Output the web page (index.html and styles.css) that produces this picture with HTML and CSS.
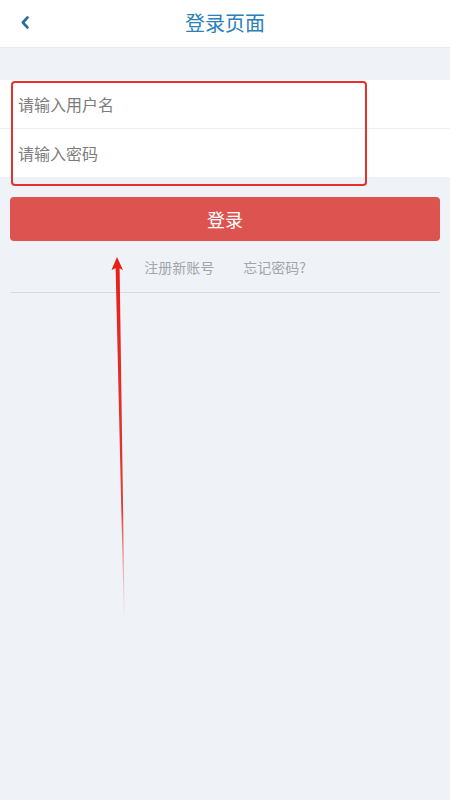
FILE: index.html
```html
<!DOCTYPE html>
<html lang="zh-CN">
<head>
<meta charset="utf-8">
<title>登录页面</title>
<link rel="stylesheet" href="styles.css">
</head>
<body>
<div class="page">
  <header class="header">
    <span class="back">
      <svg width="12" height="16" viewBox="0 0 12 16"><polyline points="8.5,2.5 3.8,7.5 8.5,12.5" fill="none" stroke="#2a6f98" stroke-width="2.6" stroke-linecap="round" stroke-linejoin="round"/></svg>
    </span>
    <h1 class="title">登录页面</h1>
  </header>

  <div class="form">
    <div class="row">请输入用户名</div>
    <div class="row">请输入密码</div>
  </div>

  <div class="btn">登录</div>

  <div class="links">
    <span class="link">注册新账号</span>
    <span class="link">忘记密码?</span>
  </div>
  <div class="divider"></div>

  <div class="mark-box"></div>
  <svg class="arrow" width="450" height="800" viewBox="0 0 450 800">
    <defs>
      <linearGradient id="g" x1="0" y1="0" x2="0" y2="1">
        <stop offset="0" stop-color="#e8201a"/>
        <stop offset="0.7" stop-color="#e23a36"/>
        <stop offset="1" stop-color="#f0c8d0" stop-opacity="0.4"/>
      </linearGradient>
    </defs>
    <polygon points="115.6,267 119.6,267 124.6,615 123.8,615" fill="url(#g)"/>
    <polygon points="117,257 111.5,270 117.6,267.5 123,270" fill="#e8201a"/>
  </svg>
</div>
</body>
</html>
```

FILE: styles.css
```css
html, body {
  margin: 0;
  padding: 0;
}
body {
  background: #eff3f8;
  font-family: "Noto Sans CJK SC", "Noto Sans", sans-serif;
}
.page {
  position: relative;
  width: 450px;
  min-height: 800px;
}
.header {
  height: 47px;
  background: #ffffff;
  border-bottom: 1px solid #e7eaef;
  display: flex;
  align-items: center;
  justify-content: center;
  position: relative;
}
.back {
  position: absolute;
  left: 19px;
  top: 15px;
  display: flex;
}
.title {
  margin: 0;
  font-size: 20px;
  font-weight: normal;
  color: #2b80b6;
  line-height: 1;
  margin-top: -2px;
}
.form {
  margin-top: 32px;
  background: #ffffff;
}
.row {
  height: 48px;
  display: flex;
  align-items: center;
  padding-left: 18px;
  font-size: 16px;
  color: #7d7d7d;
}
.row + .row {
  border-top: 1px solid #eceef1;
}
.btn {
  margin: 20px 10px 0;
  height: 44px;
  background: #dd5350;
  border-radius: 4px;
  color: #ffffff;
  font-size: 18px;
  display: flex;
  align-items: center;
  justify-content: center;
}
.links {
  height: 51px;
  display: flex;
  align-items: center;
  justify-content: center;
  gap: 29px;
}
.link {
  font-size: 14px;
  color: #a3a5a8;
}
.divider {
  margin: 0 10px;
  height: 1px;
  background: #d6d9de;
}
.mark-box {
  position: absolute;
  left: 11px;
  top: 81px;
  width: 352px;
  height: 101px;
  border: 2.5px solid #e5312c;
  border-radius: 4px;
}
.arrow {
  position: absolute;
  left: 0;
  top: 0;
  pointer-events: none;
}
```
